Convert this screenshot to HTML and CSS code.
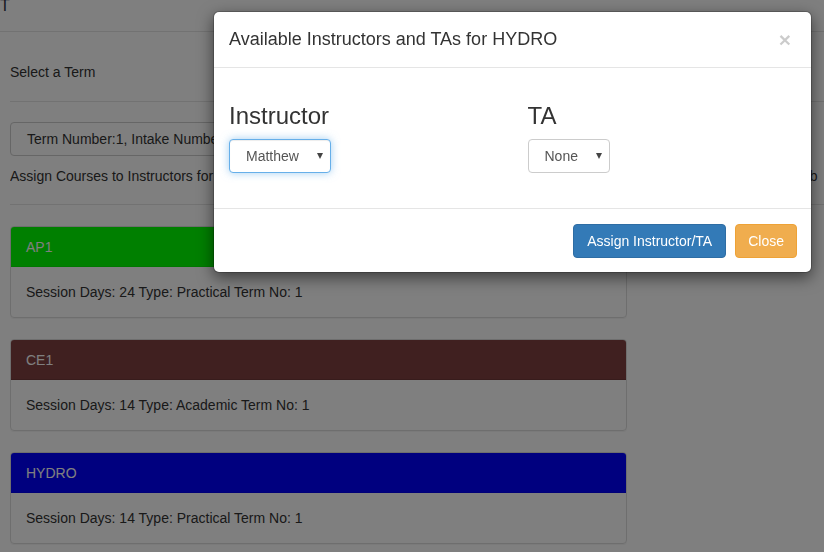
FILE: index.html
```html
<!DOCTYPE html>
<html>
<head>
<meta charset="utf-8">
<title>Assign Instructors</title>
<link rel="stylesheet" href="styles.css">
</head>
<body>
<div class="page">
  <div class="topbar"><span class="brand">T</span></div>
  <div class="section section-title">Select a Term</div>
  <div class="section section-term">
    <div class="term-select">Term Number:1, Intake Number:1, Start Date: 2017-01-09</div>
    <p class="assign-note">Assign Courses to Instructors for Term Number:1, Intake Number:1 Select a course from the list below, then choose an instructor b</p>
  </div>
  <div class="panels">
    <div class="panel">
      <div class="panel-heading heading-green">AP1</div>
      <div class="panel-body">Session Days: 24 Type: Practical Term No: 1</div>
    </div>
    <div class="panel">
      <div class="panel-heading heading-brown">CE1</div>
      <div class="panel-body">Session Days: 14 Type: Academic Term No: 1</div>
    </div>
    <div class="panel">
      <div class="panel-heading heading-blue">HYDRO</div>
      <div class="panel-body">Session Days: 14 Type: Practical Term No: 1</div>
    </div>
  </div>
</div>

<div class="backdrop"></div>

<div class="modal">
  <div class="modal-header">
    <h4 class="modal-title">Available Instructors and TAs for HYDRO</h4>
    <span class="close">&times;</span>
  </div>
  <div class="modal-body">
    <div class="col">
      <h3 class="col-title">Instructor</h3>
      <div class="select focused"><span class="select-value">Matthew</span><span class="caret"></span></div>
    </div>
    <div class="col">
      <h3 class="col-title">TA</h3>
      <div class="select"><span class="select-value">None</span><span class="caret"></span></div>
    </div>
  </div>
  <div class="modal-footer">
    <button class="btn btn-primary">Assign Instructor/TA</button>
    <button class="btn btn-warning">Close</button>
  </div>
</div>
</body>
</html>
```
FILE: styles.css
```css
* { box-sizing: border-box; }
html, body {
  margin: 0;
  padding: 0;
  width: 824px;
  height: 552px;
  overflow: hidden;
  background: #fff;
  font-family: "Liberation Sans", Arial, Helvetica, sans-serif;
  font-size: 14px;
  line-height: 20px;
  color: #333;
}
.page { width: 824px; }
.topbar {
  height: 32px;
  border-bottom: 1px solid #e5e5e5;
  overflow: hidden;
}
.brand {
  display: block;
  font-size: 16px;
  line-height: 12px;
  margin-top: 0;
  margin-left: 0;
  color: #2a2f45;
}
.section-title {
  margin-left: 10px;
  padding: 30px 0 19px;
  border-bottom: 1px solid #e5e5e5;
}
.section-term {
  margin-left: 10px;
  padding-top: 20px;
  padding-bottom: 18px;
  border-bottom: 1px solid #e5e5e5;
}
.term-select {
  width: 440px;
  height: 34px;
  border: 1px solid #ccc;
  border-radius: 4px;
  padding: 6px 16px;
  white-space: nowrap;
  overflow: hidden;
}
.assign-note {
  margin: 10px 0 0;
  white-space: nowrap;
  overflow: hidden;
}
.panels {
  padding: 21px 0 0 10px;
  width: 627px;
}
.panel {
  border: 1px solid #ddd;
  border-radius: 4px;
  margin-bottom: 21px;
  box-shadow: 0 1px 1px rgba(0,0,0,.05);
  overflow: hidden;
}
.panel-heading {
  height: 40px;
  padding: 10px 15px;
  color: #fff;
  font-size: 14px;
}
.heading-green { background: #00ff00; border-bottom: 1px solid #00ee00; }
.heading-brown { background: #804141; border-bottom: 1px solid #703838; }
.heading-blue { background: #0000ff; border-bottom: 1px solid #0000ee; }
.panel-body {
  padding: 15px;
}
.backdrop {
  position: fixed;
  inset: 0;
  background: rgba(0,0,0,.5);
}
.modal {
  position: absolute;
  left: 213px;
  top: 11px;
  width: 599px;
  background: #fff;
  border: 1px solid rgba(0,0,0,.2);
  border-radius: 6px;
  box-shadow: 0 5px 15px rgba(0,0,0,.5);
  background-clip: padding-box;
}
.modal-header {
  display: flex;
  align-items: flex-start;
  justify-content: space-between;
  padding: 15px;
  border-bottom: 1px solid #e5e5e5;
}
.modal-title {
  margin: 0;
  font-size: 18px;
  font-weight: 500;
  line-height: 25px;
  color: #333;
}
.close {
  font-size: 21px;
  font-weight: bold;
  line-height: 1;
  color: #000;
  opacity: .2;
  margin-top: 2px;
  margin-right: 5px;
}
.modal-body {
  display: flex;
  padding: 15px 0 35px;
}
.col {
  width: 299px;
  padding: 0 15px;
}
.col-title {
  margin: 20px 0 10px;
  font-size: 24px;
  font-weight: 500;
  line-height: 26px;
  color: #333;
}
.select {
  display: inline-flex;
  align-items: center;
  height: 34px;
  padding: 0 7px 0 16px;
  border: 1px solid #ccc;
  border-radius: 4px;
  color: #555;
  background: #fff;
}
.select.focused {
  border-color: #66afe9;
  box-shadow: inset 0 1px 1px rgba(0,0,0,.075), 0 0 8px rgba(102,175,233,.6);
}
.select-value { margin-right: 18px; }
.caret {
  width: 0;
  height: 0;
  border-left: 3.5px solid transparent;
  border-right: 3.5px solid transparent;
  border-top: 6px solid #444;
  margin-top: -1px;
}
.modal-footer {
  display: flex;
  justify-content: flex-end;
  gap: 9px;
  padding: 15px 14px 14px;
  border-top: 1px solid #e5e5e5;
}
.btn {
  font-family: inherit;
  font-size: 14px;
  line-height: 20px;
  padding: 6px 12px;
  border-radius: 4px;
  border: 1px solid transparent;
  color: #fff;
  cursor: pointer;
}
.btn-primary { background: #337ab7; border-color: #2e6da4; padding: 6px 13px; }
.btn-warning { background: #f0ad4e; border-color: #eea236; }
```
